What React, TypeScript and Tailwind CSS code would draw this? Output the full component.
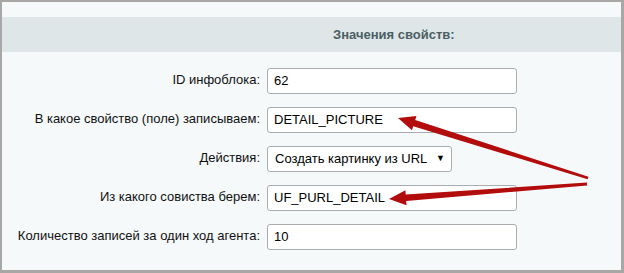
import React from "react";

function arrowPoly(tx: number, ty: number, px: number, py: number) {
  const dx = px - tx;
  const dy = py - ty;
  const len = Math.hypot(dx, dy);
  const ux = dx / len;
  const uy = dy / len;
  const nx = -uy;
  const ny = ux;
  const headLen = 17;
  const headHalf = 7.5;
  const tailHalf = 1.4;
  const neckHalf = 3.2;
  const bx = px - ux * headLen;
  const by = py - uy * headLen;
  const pts = [
    [tx + nx * tailHalf, ty + ny * tailHalf],
    [bx + nx * neckHalf, by + ny * neckHalf],
    [bx + nx * headHalf, by + ny * headHalf],
    [px, py],
    [bx - nx * headHalf, by - ny * headHalf],
    [bx - nx * neckHalf, by - ny * neckHalf],
    [tx - nx * tailHalf, ty - ny * tailHalf],
  ];
  return pts.map((p) => p.map((v) => v.toFixed(1)).join(",")).join(" ");
}

const rows: { label: string; value: string; select?: boolean }[] = [
  { label: "ID инфоблока:", value: "62" },
  { label: "В какое свойство (поле) записываем:", value: "DETAIL_PICTURE" },
  { label: "Действия:", value: "Создать картинку из URL", select: true },
  { label: "Из какого совиства берем:", value: "UF_PURL_DETAIL" },
  { label: "Количество записей за один ход агента:", value: "10" },
];

export default function App() {
  return (
    <div
      className="relative w-[624px] h-[273px] bg-[#f5f9fa] border-t-2 border-l-2 border-r-[3px] border-b-[3px] border-[#a9a6a6] text-[13px] text-[#111]"
      style={{ fontFamily: '"Liberation Sans", Arial, sans-serif' }}
    >
      <div className="h-[15px]" />
      <div className="h-[35px] bg-[#dfe6e8] flex items-center pl-[331px] font-bold text-[#4b5f64]">
        Значения свойств:
      </div>
      <div className="pt-[16px] flex flex-col gap-[13px]">
        {rows.map((r) => (
          <div key={r.label} className="flex items-start">
            <div className="w-[258px] text-right pt-[4px] leading-[15px]">{r.label}</div>
            <div className="pl-[7px]">
              {r.select ? (
                <div className="w-[185px] h-[26px] bg-white border border-[#a9adb1] rounded-[3px] flex items-center justify-between pl-[7px] pr-[6px] text-black">
                  <span>{r.value}</span>
                  <span className="text-[9px]">▼</span>
                </div>
              ) : (
                <div className="w-[250px] h-[26px] bg-white border border-[#a9adb1] rounded-[3px] flex items-center pl-[6px] text-black">
                  {r.value}
                </div>
              )}
            </div>
          </div>
        ))}
      </div>
      <svg
        className="absolute left-[-2px] top-[-2px] pointer-events-none"
        width="624"
        height="273"
        viewBox="0 0 624 273"
      >
        <polygon points={arrowPoly(588, 178, 398, 118)} fill="#b20c0c" />
        <polygon points={arrowPoly(587, 184, 389, 199)} fill="#b20c0c" />
      </svg>
    </div>
  );
}
